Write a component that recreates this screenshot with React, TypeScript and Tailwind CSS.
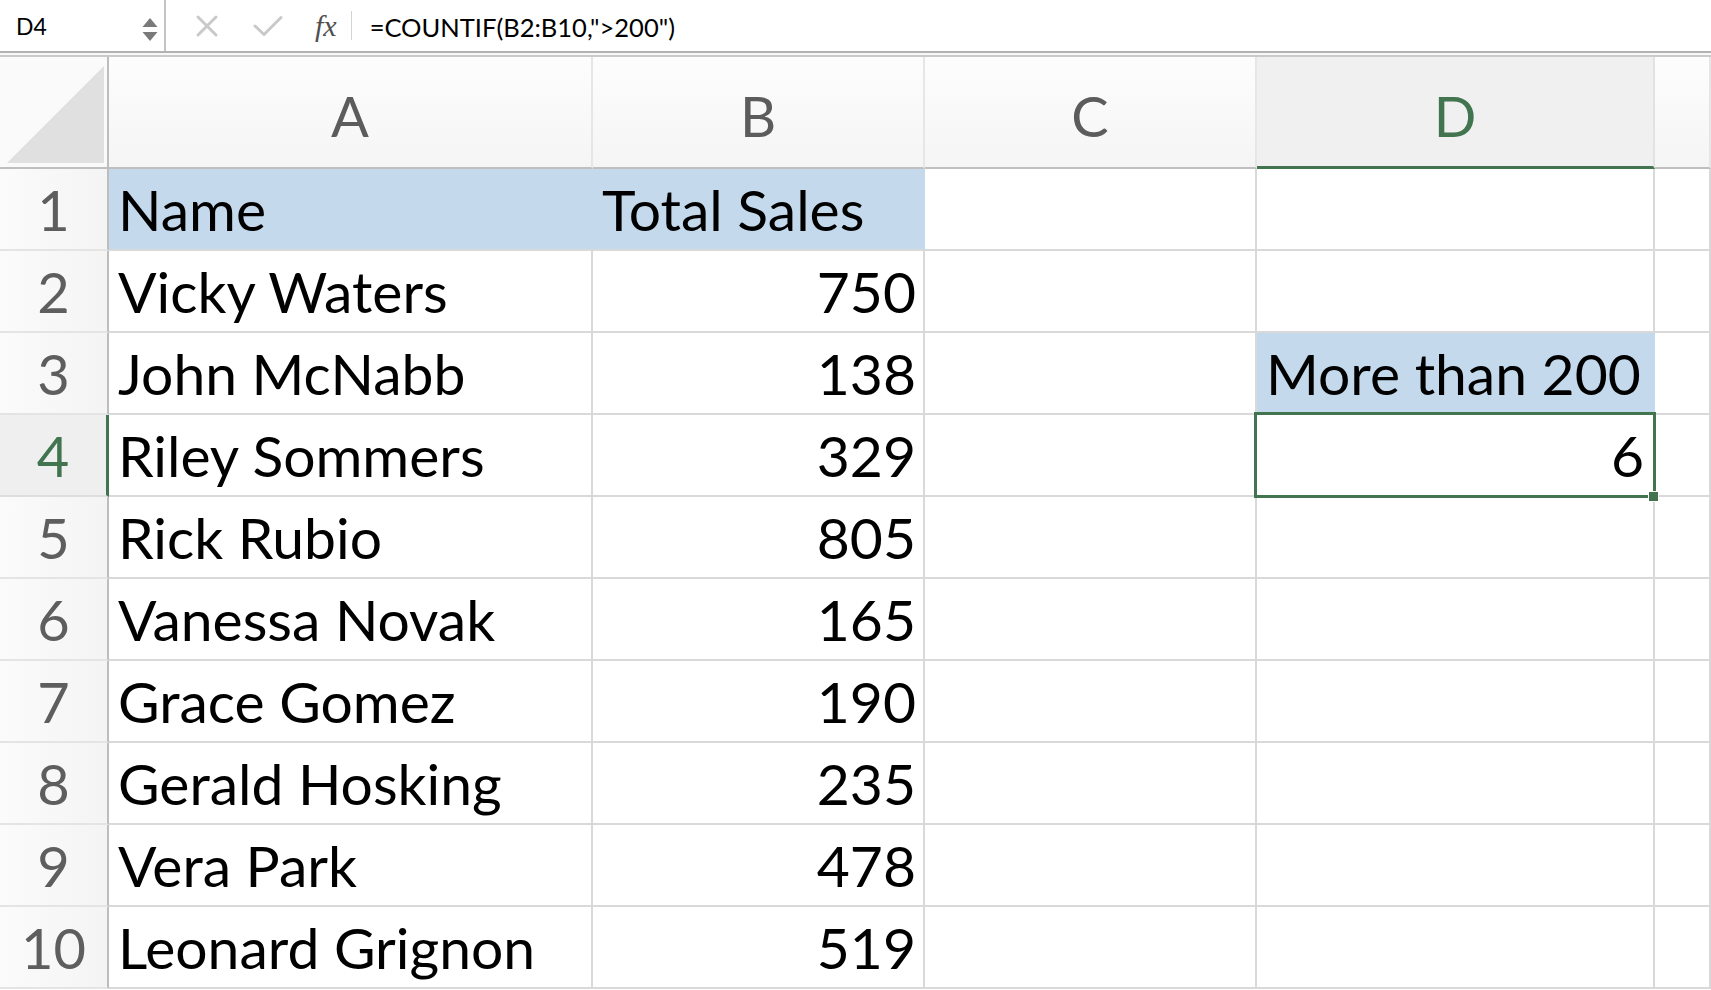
import React from "react";

const data: [string, number | null][] = [
  ["Vicky Waters", 750],
  ["John McNabb", 138],
  ["Riley Sommers", 329],
  ["Rick Rubio", 805],
  ["Vanessa Novak", 165],
  ["Grace Gomez", 190],
  ["Gerald Hosking", 235],
  ["Vera Park", 478],
  ["Leonard Grignon", 519],
];

function FormulaBar() {
  return (
    <div className="flex h-[51px] bg-white">
      <div className="flex w-[166px] shrink-0 items-center justify-between border-r-2 border-[#c4c4c4] pl-[16px] pr-[5px]">
        <span className="pt-[2px] text-[23px] text-black">D4</span>
        <svg width="18" height="34" viewBox="0 0 18 34">
          <path d="M9 9 L16.5 18 L1.5 18 Z" fill="#7a7a7a" />
          <path d="M1.5 32 L16.5 32 L9 41 Z" fill="#7a7a7a" transform="translate(0 -9)" />
        </svg>
      </div>
      <div className="flex items-center">
        <svg width="24" height="24" viewBox="0 0 24 24" className="ml-[29px]">
          <path d="M3 3 L21 21 M21 3 L3 21" stroke="#c9c9c9" strokeWidth="3" strokeLinecap="round" />
        </svg>
        <svg width="30" height="22" viewBox="0 0 30 22" className="ml-[34px]">
          <path d="M2 11 L11 19.5 L28 2.5" stroke="#c9c9c9" strokeWidth="3" fill="none" strokeLinecap="round" strokeLinejoin="round" />
        </svg>
        <span className="ml-[32px] font-['Liberation_Serif',serif] text-[30px] italic leading-none text-[#505050]">
          fx
        </span>
        <div className="ml-[14px] h-[29px] w-px bg-[#d3d3d3]" />
        <span className="ml-[18px] pt-[3px] text-[25.5px] text-black">=COUNTIF(B2:B10,"&gt;200")</span>
      </div>
    </div>
  );
}

function ColHeader({ label, selected }: { label: string; selected?: boolean }) {
  return (
    <div
      className={
        selected
          ? "flex items-end justify-center border-r-2 border-b-[3px] border-r-[#e2e2e2] border-b-[#41744f] bg-[#f0f0f0] pb-[22px] text-[#41744f]"
          : "flex items-end justify-center border-r-2 border-b-2 border-r-[#e6e6e6] border-b-[#bfbfbf] bg-linear-to-b from-[#fdfdfd] to-[#f5f5f5] pb-[23px] text-[#5c5c5c]"
      }
    >
      <span className="leading-none">{label}</span>
    </div>
  );
}

function RowHeader({ n, selected }: { n: number; selected?: boolean }) {
  return (
    <div
      className={
        selected
          ? "flex items-end justify-center border-r-[3px] border-b-2 border-r-[#41744f] border-b-[#dedede] bg-[#efefef] pb-[11px] text-[#41744f]"
          : "flex items-end justify-center border-r-2 border-b-2 border-r-[#bdbdbd] border-b-[#e4e4e4] bg-linear-to-r from-[#fbfbfb] to-[#f4f4f4] pb-[11px] text-[#5e5e5e]"
      }
    >
      <span className="leading-none">{n}</span>
    </div>
  );
}

function Cell({
  children,
  right,
  blue,
  noRightLine,
}: {
  children?: React.ReactNode;
  right?: boolean;
  blue?: boolean;
  noRightLine?: boolean;
}) {
  return (
    <div
      className={[
        "flex items-end border-b-2 border-r-2 pb-[11px] text-[57px] text-black",
        right ? "justify-end pr-[7px]" : "pl-[9px]",
        blue ? "bg-[#c5d9ed]" : "bg-white",
        noRightLine ? "border-r-[#c5d9ed]" : "border-r-[#d9d9d9]",
        "border-b-[#d9d9d9]",
      ].join(" ")}
    >
      <span className="whitespace-nowrap leading-none">{children}</span>
    </div>
  );
}

export default function App() {
  return (
    <div className="h-[990px] w-[1711px] overflow-hidden bg-white font-['Lato',sans-serif]">
      <FormulaBar />
      <div className="h-[6px] border-t-2 border-b-2 border-t-[#b2b2b2] border-b-[#cacaca] bg-[#f7f7f7]" />

      <div className="grid grid-cols-[109px_484px_332px_332px_398px_1fr] grid-rows-[112px_repeat(10,82px)] text-[56px]">
        {/* corner */}
        <div className="flex items-end justify-end border-r-2 border-b-2 border-r-[#bdbdbd] border-b-[#bfbfbf] bg-[#fafafa] pr-[3px] pb-[4px]">
          <svg width="97" height="97" viewBox="0 0 97 97">
            <path d="M0 97 L97 0 L97 97 Z" fill="#e0e0e0" />
          </svg>
        </div>
        <ColHeader label="A" />
        <ColHeader label="B" />
        <ColHeader label="C" />
        <ColHeader label="D" selected />
        <ColHeader label="" />

        {/* row 1 */}
        <RowHeader n={1} />
        <Cell blue noRightLine>Name</Cell>
        <Cell blue noRightLine>Total Sales</Cell>
        <Cell />
        <Cell />
        <Cell />

        {data.map(([name, sales], i) => {
          const row = i + 2;
          return (
            <React.Fragment key={row}>
              <RowHeader n={row} selected={row === 4} />
              <Cell>{name}</Cell>
              <Cell right>{sales}</Cell>
              <Cell />
              {row === 3 ? (
                <Cell blue noRightLine>More than 200</Cell>
              ) : row === 4 ? (
                <div className="relative flex items-end justify-end border-r-2 border-b-2 border-[#d9d9d9] bg-white pr-[9px] pb-[11px] text-[57px] text-black">
                  <span className="leading-none">6</span>
                  <div className="pointer-events-none absolute -top-[3px] -right-[3px] -bottom-[3px] -left-[3px] border-[3px] border-[#41744f]" />
                  <div className="absolute -right-[6px] -bottom-[7px] h-[11px] w-[11px] border border-white bg-[#41744f]" />
                </div>
              ) : (
                <Cell />
              )}
              <Cell />
            </React.Fragment>
          );
        })}
      </div>
    </div>
  );
}
